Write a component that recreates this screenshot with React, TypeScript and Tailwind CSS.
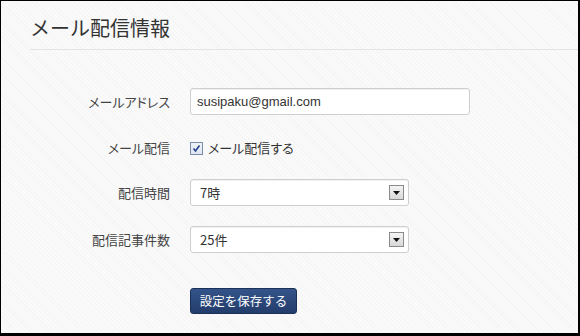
const jp = "font-['Noto_Sans_CJK_JP','Liberation_Sans',sans-serif]"
const palt = "[font-feature-settings:'palt']"

function SelectBox({ value }: { value: string }) {
    return (
        <div className="w-[219px] h-[27px] bg-white border border-[#cfcfcf] rounded-[3px] flex items-center justify-between pl-[9px] pr-[4px] shadow-[inset_0_1px_1px_rgba(0,0,0,0.06)]">
            <span className="text-[13px] text-[#333]">{value}</span>
            <div className="w-[15px] h-[15px] border border-[#8a8a8a] bg-gradient-to-b from-[#f4f4f4] to-[#d8d8d8] flex items-center justify-center">
                <svg width="7" height="4" viewBox="0 0 7 4">
                    <path d="M0 0h7L3.5 4z" fill="#111" />
                </svg>
            </div>
        </div>
    )
}

function Row({ label, children, className }: { label: string; children: React.ReactNode; className: string }) {
    return (
        <div className={`flex items-center ${className}`}>
            <div className={`w-[169px] text-right text-[13px] text-[#444] ${palt}`}>{label}</div>
            <div className="ml-[20px]">{children}</div>
        </div>
    )
}

export default function App() {
    return (
        <div className={`w-[580px] h-[336px] border-t border-l border-r-2 border-b-[3px] border-black bg-[#f9f9f9] bg-[repeating-linear-gradient(45deg,#f5f5f5_0px,#f5f5f5_1px,#fafafa_1px,#fafafa_3px)] ${jp}`}>
            <div className="ml-[29px] pt-[13px] pb-[7px] border-b border-[#e4e4e4]">
                <h1 className="text-[20px] leading-[28px] text-[#333] font-normal">メール配信情報</h1>
            </div>

            <Row label="メールアドレス" className="mt-[38px]">
                <div className="w-[280px] h-[27px] bg-white border border-[#cfcfcf] rounded-[3px] flex items-center pl-[6px] shadow-[inset_0_1px_1px_rgba(0,0,0,0.06)]">
                    <span className="text-[13px] text-[#333] font-['Liberation_Sans',sans-serif]">susipaku@gmail.com</span>
                </div>
            </Row>

            <Row label="メール配信" className="mt-[20px] h-[26px]">
                <div className="flex items-center gap-[5px]">
                    <div className="w-[13px] h-[13px] border border-[#7b8da8] bg-gradient-to-b from-[#eef2f8] to-[#dfe6f0] flex items-center justify-center">
                        <svg width="9" height="9" viewBox="0 0 9 9">
                            <path d="M1.5 4.5L3.5 7L7.5 1.5" fill="none" stroke="#23408a" strokeWidth="1.6" />
                        </svg>
                    </div>
                    <span className={`text-[13px] text-[#333] ${palt}`}>メール配信する</span>
                </div>
            </Row>

            <Row label="配信時間" className="mt-[18px]">
                <SelectBox value="7時" />
            </Row>

            <Row label="配信記事件数" className="mt-[20px]">
                <SelectBox value="25件" />
            </Row>

            <div className="ml-[189px] mt-[35px]">
                <button className="w-[107px] h-[26px] rounded-[3px] bg-gradient-to-b from-[#34548a] to-[#233d6b] border border-[#1c3158] text-white text-[12.5px] flex items-center justify-center">
                    設定を保存する
                </button>
            </div>
        </div>
    )
}
